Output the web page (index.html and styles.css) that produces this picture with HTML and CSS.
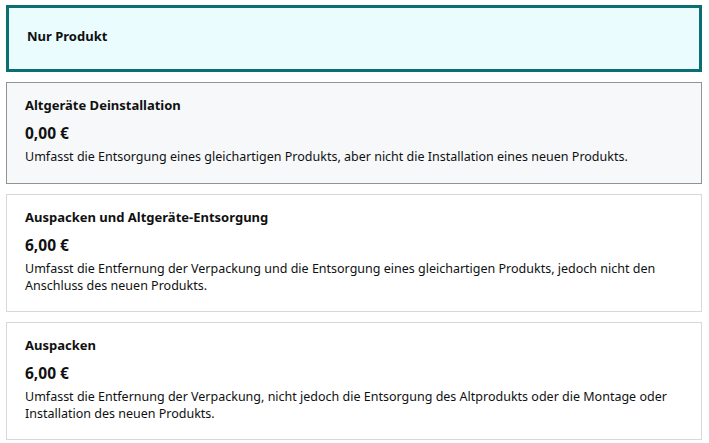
FILE: index.html
```html
<!DOCTYPE html>
<html lang="de">
<head>
	<meta charset="UTF-8">
	<title>Serviceoptionen</title>
	<link rel="stylesheet" href="styles.css">
</head>
<body>
	<div class="options">
		<div class="option selected">
			<div class="title">Nur Produkt</div>
		</div>
		<div class="option current">
			<div class="title">Altgeräte Deinstallation</div>
			<div class="price">0,00 €</div>
			<div class="desc">Umfasst die Entsorgung eines gleichartigen Produkts, aber nicht die Installation eines neuen Produkts.</div>
		</div>
		<div class="option">
			<div class="title">Auspacken und Altgeräte-Entsorgung</div>
			<div class="price">6,00 €</div>
			<div class="desc">Umfasst die Entfernung der Verpackung und die Entsorgung eines gleichartigen Produkts, jedoch nicht den Anschluss des neuen Produkts.</div>
		</div>
		<div class="option">
			<div class="title">Auspacken</div>
			<div class="price">6,00 €</div>
			<div class="desc">Umfasst die Entfernung der Verpackung, nicht jedoch die Entsorgung des Altprodukts oder die Montage oder Installation des neuen Produkts.</div>
		</div>
	</div>
</body>
</html>
```

FILE: styles.css
```css
body {
	margin: 0;
	font-family: "Noto Sans", Arial, sans-serif;
	color: #0f1111;
}
.options {
	display: flex;
	flex-direction: column;
	gap: 10px;
	padding: 5px 7px 0 6px;
}
.option {
	border: 1px solid #d5d9d9;
	padding: 13px 18px 17px;
	background: #fff;
}
.option.selected {
	border: 3px solid #0b6e73;
	background: #eafcfd;
	padding: 19px 18px 24px;
}
.option.current {
	border-color: #8f9494;
	background: #f7f8fa;
	padding-bottom: 18px;
}
.title {
	font-size: 13px;
	font-weight: bold;
	line-height: 18px;
}
.price {
	font-size: 15.5px;
	font-weight: bold;
	line-height: 20px;
	margin-top: 9px;
}
.desc {
	font-size: 12.5px;
	line-height: 17px;
	margin-top: 5px;
}
```
